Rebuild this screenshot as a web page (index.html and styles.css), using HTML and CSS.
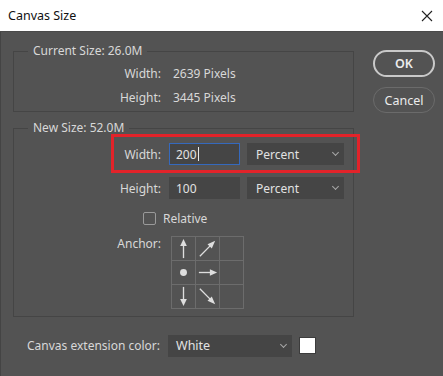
FILE: index.html
```html
<!DOCTYPE html>
<html lang="en">
<head>
    <meta charset="UTF-8">
    <title>Canvas Size</title>
    <link rel="stylesheet" href="styles.css">
</head>
<body>
    <div class="window">
        <!-- title bar -->
        <div class="titlebar">
            <span class="title">Canvas Size</span>
            <svg class="close" width="12" height="12" viewBox="0 0 12 12">
                <path d="M1 1 L11 11 M11 1 L1 11" stroke="#222" stroke-width="1.1" fill="none"/>
            </svg>
        </div>

        <div class="content">
            <div class="main">
                <!-- current size -->
                <fieldset class="group current">
                    <legend>Current Size: 26.0M</legend>
                    <div class="row info">
                        <span class="label">Width:</span>
                        <span class="value">2639 Pixels</span>
                    </div>
                    <div class="row info">
                        <span class="label">Height:</span>
                        <span class="value">3445 Pixels</span>
                    </div>
                </fieldset>

                <!-- new size -->
                <fieldset class="group newsize">
                    <legend>New Size: 52.0M</legend>
                    <div class="row field">
                        <span class="label">Width:</span>
                        <div class="input focused">200<span class="caret"></span></div>
                        <div class="select unit">Percent<span class="chev"></span></div>
                    </div>
                    <div class="row field second">
                        <span class="label">Height:</span>
                        <div class="input">100</div>
                        <div class="select unit">Percent<span class="chev"></span></div>
                    </div>
                    <div class="row relative">
                        <span class="checkbox"></span>
                        <span>Relative</span>
                    </div>
                    <div class="row anchor">
                        <span class="label">Anchor:</span>
                        <div class="grid">
                            <div class="cell">
                                <svg viewBox="0 0 24 24"><path d="M12 9 V22" /><polygon points="12,2 8.5,9.5 15.5,9.5"/></svg>
                            </div>
                            <div class="cell">
                                <svg viewBox="0 0 24 24"><path d="M4 20 L15 9" /><polygon points="20,4 12,7.5 16.5,12"/></svg>
                            </div>
                            <div class="cell"></div>
                            <div class="cell">
                                <svg viewBox="0 0 24 24"><circle cx="12" cy="12" r="3.6" class="dot"/></svg>
                            </div>
                            <div class="cell">
                                <svg viewBox="0 0 24 24"><path d="M3 12 H15" /><polygon points="22,12 14.5,8.5 14.5,15.5"/></svg>
                            </div>
                            <div class="cell"></div>
                            <div class="cell">
                                <svg viewBox="0 0 24 24"><path d="M12 2 V15" /><polygon points="12,22 8.5,14.5 15.5,14.5"/></svg>
                            </div>
                            <div class="cell">
                                <svg viewBox="0 0 24 24"><path d="M4 4 L15 15" /><polygon points="20,20 12,16.5 16.5,12"/></svg>
                            </div>
                            <div class="cell"></div>
                        </div>
                    </div>
                </fieldset>

                <!-- extension colour -->
                <div class="row extension">
                    <span class="ext-label">Canvas extension color:</span>
                    <div class="select color">White<span class="chev"></span></div>
                    <span class="swatch"></span>
                </div>
            </div>

            <div class="buttons">
                <button class="btn ok">OK</button>
                <button class="btn cancel">Cancel</button>
            </div>

            <!-- red highlight box -->
            <div class="highlight"></div>
        </div>
    </div>
</body>
</html>
```

FILE: styles.css
```css
* {
    margin: 0;
    padding: 0;
    box-sizing: border-box;
}
body {
    width: 443px;
    height: 376px;
    overflow: hidden;
    font-family: "Noto Sans", "Open Sans", sans-serif;
    font-size: 12px;
    color: #d8d8d8;
    background: #535353;
}
.window {
    width: 443px;
    height: 376px;
    display: flex;
    flex-direction: column;
}
/* title bar */
.titlebar {
    height: 32px;
    background: #fff;
    display: flex;
    align-items: center;
    justify-content: space-between;
    padding: 0 10px 0 8px;
    border-bottom: 1px solid #4a4a4a;
}
.title {
    color: #111;
    font-size: 12.5px;
}
.close {
    display: block;
}
/* dialog body */
.content {
    position: relative;
    flex: 1;
    display: flex;
    padding-left: 12px;
    border-left: 1px solid #444;
}
.main {
    width: 341px;
    display: flex;
    flex-direction: column;
}
.group {
    border: 1px solid #454545;
    padding: 0;
}
.group legend {
    margin-left: 14px;
    padding: 0 5px;
    line-height: 16px;
    height: 16px;
    font-size: 12px;
}
.current {
    margin-top: 11px;
    padding: 2px 0 2px;
}
.newsize {
    margin-top: 8px;
    padding: 7px 0 7px;
}
.row {
    display: flex;
    align-items: center;
}
.label {
    width: 147px;
    text-align: right;
}
.info {
    height: 24px;
}
.info .value {
    margin-left: 12px;
}
.field {
    height: 22px;
}
.field.second {
    margin-top: 12px;
}
.input {
    margin-left: 8px;
    width: 71px;
    height: 22px;
    background: #454545;
    border: 1px solid #454545;
    padding-left: 6px;
    display: flex;
    align-items: center;
    color: #e2e2e2;
}
.input.focused {
    border-color: #3569bd;
}
.caret {
    width: 1px;
    height: 14px;
    background: #e8e8e8;
    margin-left: 1px;
}
.select {
    position: relative;
    height: 22px;
    background: #454545;
    display: flex;
    align-items: center;
    color: #e2e2e2;
}
.unit {
    margin-left: 7px;
    width: 97px;
    padding-left: 9px;
}
.chev {
    position: absolute;
    right: 6px;
    top: 7px;
    width: 5px;
    height: 5px;
    border-right: 1px solid #a8a8a8;
    border-bottom: 1px solid #a8a8a8;
    transform: rotate(45deg);
}
.relative {
    margin-top: 11px;
    height: 16px;
    padding-left: 129px;
    gap: 7px;
}
.checkbox {
    width: 13px;
    height: 13px;
    border: 1px solid #9a9a9a;
    border-radius: 2px;
}
.anchor {
    margin-top: 10px;
    align-items: flex-start;
}
.anchor .label {
    line-height: 16px;
}
.grid {
    margin-left: 10px;
    display: grid;
    grid-template-columns: repeat(3, 24px);
    grid-template-rows: repeat(3, 24px);
    border-top: 1px solid #6c6c6c;
    border-left: 1px solid #6c6c6c;
}
.cell {
    border-right: 1px solid #6c6c6c;
    border-bottom: 1px solid #6c6c6c;
    display: flex;
    align-items: center;
    justify-content: center;
}
.cell svg {
    width: 23px;
    height: 23px;
    stroke: #dedede;
    stroke-width: 1.4;
    fill: #dedede;
}
.cell svg polygon,
.cell svg .dot {
    stroke: none;
}
/* extension colour row */
.extension {
    margin-top: 18px;
    height: 21px;
}
.ext-label {
    margin-left: 14px;
}
.color {
    margin-left: 8px;
    width: 124px;
    padding-left: 8px;
    font-size: 12.5px;
}
.swatch {
    margin-left: 7px;
    width: 17px;
    height: 17px;
    background: #fff;
    border: 1px solid #3c3c3c;
}
/* buttons */
.buttons {
    margin-left: 19px;
    margin-top: 18px;
    display: flex;
    flex-direction: column;
    gap: 10px;
}
.btn {
    width: 62px;
    height: 27px;
    border-radius: 14px;
    background: transparent;
    font-family: "Noto Sans", "Open Sans", sans-serif;
    font-size: 12.5px;
    color: #ececec;
}
.ok {
    border: 2px solid #c9c9c9;
    font-weight: 600;
}
.cancel {
    height: 26px;
    border: 1px solid #6b6b6b;
}
/* annotation */
.highlight {
    position: absolute;
    left: 110px;
    top: 102px;
    width: 249px;
    height: 39px;
    border: 3px solid #e2232a;
}
```
